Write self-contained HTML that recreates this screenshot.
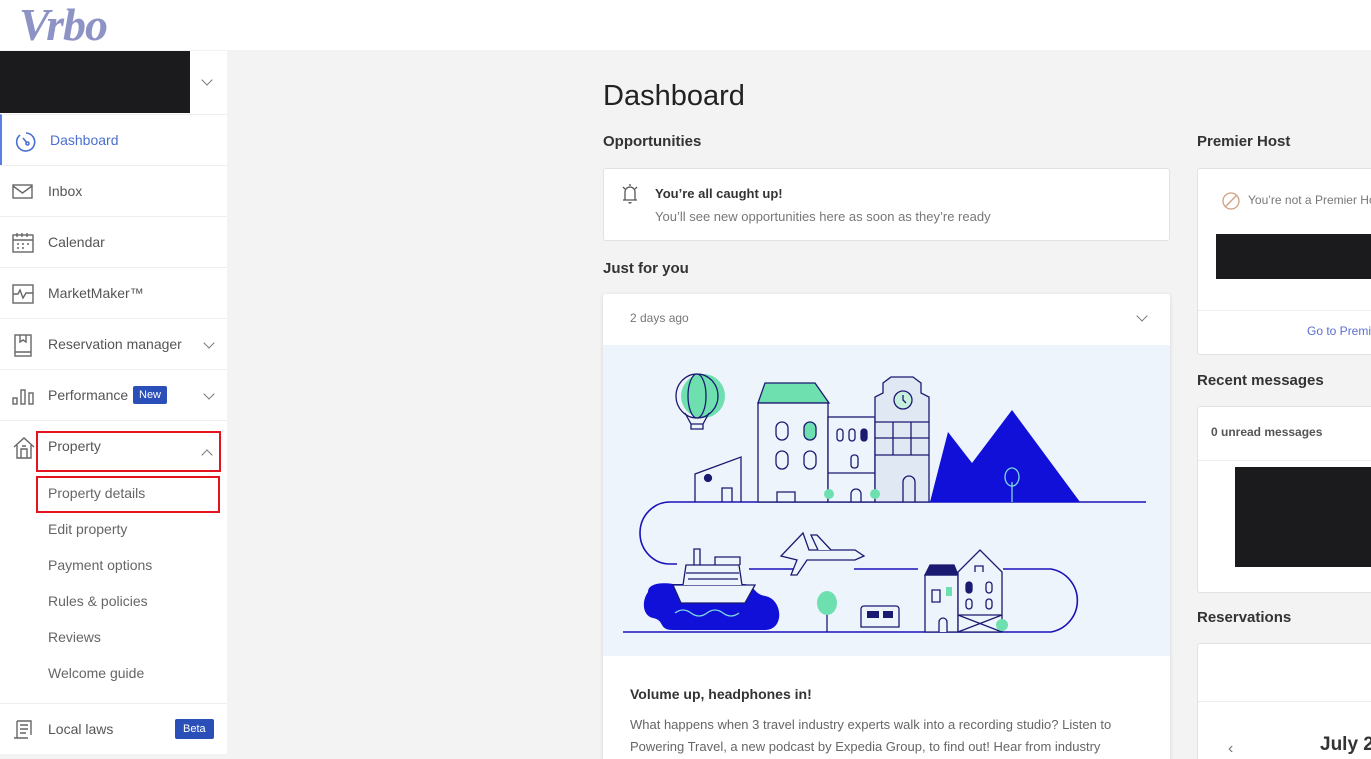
<!DOCTYPE html>
<html><head><meta charset="utf-8"><style>
*{box-sizing:border-box;margin:0;padding:0}
html,body{width:1371px;height:759px;overflow:hidden}
body{background:#f3f3f3;font-family:"Liberation Sans",sans-serif;position:relative;color:#333}
.hdr{position:absolute;left:0;top:0;width:1371px;height:50px;background:#fff}
.logo{position:absolute;left:19px;top:-2px;font-family:"Liberation Serif",serif;font-style:italic;font-weight:bold;font-size:46px;color:#8d93c4;letter-spacing:-1px}
.sb{position:absolute;left:0;top:51px;width:227px;height:703px;background:#fff}
.blk{position:absolute;left:0;top:0;width:190px;height:62px;background:#1b1b1d}
.row{position:absolute;left:0;width:227px;border-top:1px solid #eee;height:51px}
.row span{position:absolute;left:48px;top:17px;font-size:14px;color:#555}
.row svg{position:absolute;left:12px;top:15px}
.chev{position:absolute;right:14px;top:20px;width:8px;height:8px;border-right:1.3px solid #777;border-bottom:1.3px solid #777;transform:rotate(45deg)}
.badge{position:absolute;background:#2a4fb8;color:#fff;font-size:11px;padding:3px 6px;border-radius:2px}
.sub{position:absolute;left:48px;font-size:14px;color:#666}
.red{position:absolute;border:2px solid #e3141e}
.h1{position:absolute;left:603px;top:80px;font-size:29px;color:#222}
.h2{position:absolute;font-size:15px;font-weight:bold;color:#333}
.card{position:absolute;background:#fff;border:1px solid #e2e2e2;border-radius:3px}
.bk{position:absolute;background:#1b1b1d}
</style></head><body>
<div class="hdr"><div class="logo">Vrbo</div></div>
<div class="sb">
 <div class="blk"></div>
 <div class="chev" style="top:25px;right:16px"></div>
 <div class="row" style="top:63px;border-left:2px solid #5b7fe0"><svg width="24" height="24" viewBox="0 0 24 24" fill="none" stroke="#4a6fd0" stroke-width="1.6"><path d="M6 5A9 9 0 1 0 12 3"/><path d="M9 8l4 5"/><circle cx="13.5" cy="13.5" r="1.5"/></svg><span style="color:#4a6fd0">Dashboard</span></div>
 <div class="row" style="top:114px"><svg width="22" height="22" viewBox="0 0 22 22" fill="none" stroke="#666" stroke-width="1.4"><rect x="1" y="4" width="19" height="13"/><path d="M1 5l9.5 7L20 5"/></svg><span>Inbox</span></div>
 <div class="row" style="top:165px"><svg width="22" height="22" viewBox="0 0 22 22" fill="none" stroke="#666" stroke-width="1.4"><rect x="1" y="3" width="20" height="17"/><path d="M1 8h20M5 1v4M10 1v4M15 1v4M5 12h2M10 12h2M15 12h2M5 16h2M10 16h2"/></svg><span>Calendar</span></div>
 <div class="row" style="top:216px"><svg width="22" height="22" viewBox="0 0 22 22" fill="none" stroke="#666" stroke-width="1.4"><rect x="1" y="2" width="20" height="18"/><path d="M1 11h5l2-4 3 8 3-5h7"/></svg><span>MarketMaker™</span></div>
 <div class="row" style="top:267px"><svg width="22" height="24" viewBox="0 0 22 24" fill="none" stroke="#666" stroke-width="1.4"><rect x="3" y="1" width="16" height="21"/><path d="M3 18h16M8 1v7l3-2 3 2V1"/></svg><span>Reservation manager</span><div class="chev"></div></div>
 <div class="row" style="top:318px"><svg width="24" height="22" viewBox="0 0 24 22" fill="none" stroke="#666" stroke-width="1.4"><rect x="1" y="13" width="4" height="6"/><rect x="9" y="5" width="4" height="14"/><rect x="17" y="8" width="4" height="11"/></svg><span>Performance</span><div class="badge" style="left:133px;top:16px">New</div><div class="chev"></div></div>
 <div class="row" style="top:369px;height:334px"><svg width="24" height="24" viewBox="0 0 24 24" fill="none" stroke="#666" stroke-width="1.4"><path d="M2 11L12 2l10 9M5 9v13h14V9M9 22v-9h6v9M10 10h4"/></svg><span>Property</span></div>
 <div class="red" style="left:36px;top:380px;width:185px;height:41px"></div>
 <div class="chev" style="top:400px;right:16px;transform:rotate(225deg)"></div>
 <div class="red" style="left:36px;top:425px;width:184px;height:37px"></div>
 <div class="sub" style="top:434px">Property details</div>
 <div class="sub" style="top:470px">Edit property</div>
 <div class="sub" style="top:506px">Payment options</div>
 <div class="sub" style="top:542px">Rules &amp; policies</div>
 <div class="sub" style="top:578px">Reviews</div>
 <div class="sub" style="top:614px">Welcome guide</div>
 <div class="row" style="top:652px"><svg width="22" height="22" viewBox="0 0 22 22" fill="none" stroke="#666" stroke-width="1.4"><path d="M5 2h14v14M5 2v17H2M5 19h11M8 6h8M8 10h8M8 14h6"/></svg><span>Local laws</span><div class="badge" style="left:175px;top:15px;padding:4px 8px">Beta</div></div>
</div>

<div class="h1">Dashboard</div>
<div class="h2" style="left:603px;top:133px">Opportunities</div>
<div class="card" style="left:603px;top:168px;width:567px;height:73px">
 <svg style="position:absolute;left:16px;top:14px" width="20" height="22" viewBox="0 0 20 22" fill="none" stroke="#555" stroke-width="1.3"><path d="M5 17V9a5 5 0 0 1 10 0v8H3M17 17h-2M9 19a1 1 0 0 0 2 0M3 4l2 2M17 4l-2 2M10 1v2"/></svg>
 <div style="position:absolute;left:51px;top:17px;font-size:13px;font-weight:bold;color:#333">You’re all caught up!</div>
 <div style="position:absolute;left:51px;top:40px;font-size:13px;color:#777">You’ll see new opportunities here as soon as they’re ready</div>
</div>
<div class="h2" style="left:603px;top:260px">Just for you</div>
<div class="card" style="left:603px;top:294px;width:567px;height:470px;border:none;box-shadow:0 1px 4px rgba(0,0,0,.12)">
 <div style="position:absolute;left:27px;top:17px;font-size:12px;color:#777">2 days ago</div>
 <div class="chev" style="top:18px;right:24px"></div>
 <svg style="position:absolute;left:0;top:51px" width="567" height="311" viewBox="0 0 567 311">
  <rect width="567" height="311" fill="#eef4fc"/>
  <g fill="none" stroke="#1a12b8" stroke-width="1.6">
   <path d="M543 157H67A30 31 0 0 0 67 219H74M146 224H190M251 224H315M400 224H448A32 32 0 0 1 448 287H20"/>
  </g>
  <polygon points="327,157 345,87 369,118 409,65 477,157" fill="#1010d8"/>
  <path d="M409 157v-20" stroke="#7fd8e0" stroke-width="1.3"/><ellipse cx="409" cy="132" rx="7" ry="9" fill="none" stroke="#7fd8e0" stroke-width="1.3"/>
  <g stroke="#1a1a70" stroke-width="1.3" fill="none">
   <path d="M92 157V129l46-17v45M119 157v-14h10v14"/>
   <circle cx="105" cy="133" r="3.5" fill="#1a1a70"/>
   <path d="M162 38h50l14 20H155z" fill="#6ee0b0"/>
   <rect x="155" y="58" width="70" height="99" fill="#eef4fc"/>
   <rect x="225" y="72" width="47" height="85" fill="#eef4fc"/>
   <path d="M225 128h47M248 157v-8a5 5 0 0 1 10 0v8"/>
   <path d="M272 157V52l8-4v-10l8-6h22l8 6v10l8 4v105z" fill="#e0e8f4"/>
   <path d="M272 77h54M272 93h54M272 110h54M290 77v33M308 77v33M300 157v-20a6 6 0 0 1 12 0v20" />
   <circle cx="300" cy="55" r="9" fill="#c8eedd"/><path d="M300 50v5l3 3"/>
   <path d="M174 157v-10h18v10"/>
   <rect x="173" y="77" width="12" height="18" rx="6"/><rect x="201" y="77" width="12" height="18" rx="6" fill="#6ee0b0"/>
   <rect x="173" y="106" width="12" height="18" rx="6"/><rect x="201" y="106" width="12" height="18" rx="6"/>
   <rect x="234" y="84" width="6" height="12" rx="3"/><rect x="246" y="84" width="6" height="12" rx="3"/><rect x="258" y="84" width="6" height="12" rx="3" fill="#1a1a70"/>
   <rect x="248" y="110" width="7" height="13" rx="3"/>
   <ellipse cx="100" cy="51" rx="22" ry="22" fill="#6ee0b0" stroke="none"/>
   <ellipse cx="94" cy="51" rx="21" ry="22"/><ellipse cx="94" cy="51" rx="9" ry="22"/>
   <path d="M82 68l6 11h12l6-11M88 79h12v5H88z"/>
  </g>
  <path d="M45 247c0-8 12-10 25-8h70c12 0 10 10 22 12 18 3 20 34 0 34H70c-15 0-8-10-20-12-10-2-12-16-5-26z" fill="#1010d8"/>
  <g stroke="#1a1a70" stroke-width="1.3" fill="#eef4fc">
   <path d="M70 240h82l-10 18H78z"/>
   <path d="M80 240l3-20h53l3 20M83 228h53M85 234h50M91 220v-16h6v16M112 220v-8h25v8"/>
   <path d="M200 188l6 17h46l9 6-9 4h-48l-10 15h-6l6-15-16-4z"/>
   <path d="M215 205l-7-15h6l14 15"/>
   <path d="M258 282v-18a3 3 0 0 1 3-3h32a3 3 0 0 1 3 3v18z"/>
   <path d="M322 287v-57h33v57z"/><path d="M322 230l5-10h24l4 10z" fill="#1a1a70"/>
   <path d="M355 287v-60l22-22 22 22v60z"/>
   <path d="M329 245h8v12h-8zM336 287v-10a4 4 0 0 1 8 0v10M355 270h44M355 270l44 17M399 270l-44 17"/>
   <rect x="363" y="237" width="6" height="11" rx="3" fill="#1a1a70"/><rect x="383" y="237" width="6" height="11" rx="3"/>
   <rect x="363" y="254" width="6" height="10" rx="3"/><rect x="383" y="254" width="6" height="10" rx="3"/>
   <path d="M372 227v-6h8v6"/>
  </g>
  <rect x="343" y="242" width="6" height="9" fill="#6ee0b0"/>
  <path d="M72 268q8-6 16 0t16 0t16 0t16 0" fill="none" stroke="#7fd8e0" stroke-width="1.3"/>
  <path d="M224 287v-32" stroke="#1a1a70" stroke-width="1.3"/>
  <ellipse cx="224" cy="258" rx="10" ry="12" fill="#6ee0b0"/>
  <rect x="264" y="266" width="12" height="7" fill="#1a1a70"/><rect x="280" y="266" width="10" height="7" fill="#1a1a70"/>
  <circle cx="226" cy="149" r="5" fill="#6ee0b0"/><circle cx="272" cy="149" r="5" fill="#6ee0b0"/><circle cx="399" cy="280" r="6" fill="#6ee0b0"/>
 </svg>
 <div style="position:absolute;left:27px;top:392px;font-size:14px;font-weight:bold;color:#333">Volume up, headphones in!</div>
 <div style="position:absolute;left:27px;top:420px;width:520px;font-size:13px;line-height:22px;color:#666">What happens when 3 travel industry experts walk into a recording studio? Listen to Powering Travel, a new podcast by Expedia Group, to find out! Hear from industry</div>
</div>

<div class="h2" style="left:1197px;top:133px">Premier Host</div>
<div class="card" style="left:1197px;top:168px;width:190px;height:187px">
 <svg style="position:absolute;left:24px;top:23px" width="18" height="18" viewBox="0 0 18 18" fill="none" stroke="#d0a080" stroke-width="1.3"><circle cx="9" cy="9" r="8"/><path d="M3.5 14.5l11-11"/></svg>
 <div style="position:absolute;left:50px;top:24px;font-size:12px;color:#777;white-space:nowrap">You’re not a Premier Host</div>
 <div class="bk" style="left:18px;top:65px;width:180px;height:45px"></div>
 <div style="position:absolute;left:0;top:141px;width:200px;border-top:1px solid #eee"></div>
 <div style="position:absolute;left:109px;top:155px;font-size:12px;color:#5b6fd0;white-space:nowrap">Go to Premier Host</div>
</div>
<div class="h2" style="left:1197px;top:372px">Recent messages</div>
<div class="card" style="left:1197px;top:406px;width:190px;height:187px">
 <div style="position:absolute;left:13px;top:18px;font-size:12px;font-weight:bold;color:#555">0 unread messages</div>
 <div style="position:absolute;left:0;top:53px;width:200px;border-top:1px solid #eee"></div>
 <div class="bk" style="left:37px;top:60px;width:160px;height:100px"></div>
</div>
<div class="h2" style="left:1197px;top:609px">Reservations</div>
<div class="card" style="left:1197px;top:643px;width:190px;height:130px">
 <div style="position:absolute;left:0;top:57px;width:200px;border-top:1px solid #eee"></div>
 <div style="position:absolute;left:30px;top:96px;font-size:16px;color:#777">‹</div>
 <div style="position:absolute;left:122px;top:90px;font-size:19px;font-weight:bold;color:#333;white-space:nowrap">July 2023</div>
</div>
</body></html>
